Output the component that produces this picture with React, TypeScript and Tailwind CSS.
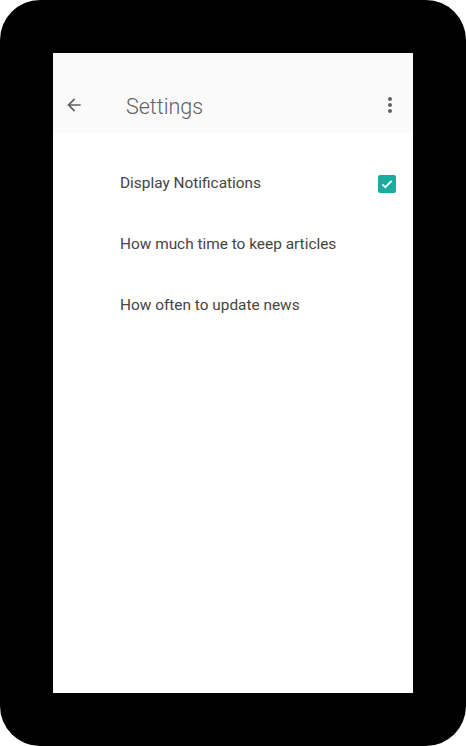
export default function App() {
  const rows = [
    { label: "Display Notifications", checked: true },
    { label: "How much time to keep articles" },
    { label: "How often to update news" },
  ];

  return (
    <div className="w-[466px] h-[746px] bg-white" style={{ fontFamily: "Roboto, 'Noto Sans', sans-serif" }}>
      <div className="w-full h-full bg-black rounded-[40px] p-[53px]">
        <div className="w-full h-full bg-white flex flex-col">
          {/* Header */}
          <div className="bg-[#fafafa] pt-[24px]">
            <div className="h-[56px] flex items-center">
              <div className="w-[73px] pl-[11px] flex items-center">
                <svg width="20" height="20" viewBox="0 0 24 24" className="text-[#616161]">
                  <path fill="currentColor" d="M20 11H7.83l5.59-5.59L12 4l-8 8 8 8 1.41-1.41L7.83 13H20v-2z" />
                </svg>
              </div>
              <h1 className="flex-1 text-[21.5px] font-light text-[#616161] pt-[4px]">Settings</h1>
              <div className="w-[35px] flex justify-start">
                <svg width="24" height="24" viewBox="0 0 24 24" className="text-[#616161]">
                  <path fill="currentColor" d="M12 8c1.1 0 2-.9 2-2s-.9-2-2-2-2 .9-2 2 .9 2 2 2zm0 2c-1.1 0-2 .9-2 2s.9 2 2 2 2-.9 2-2-.9-2-2-2zm0 6c-1.1 0-2 .9-2 2s.9 2 2 2 2-.9 2-2-.9-2-2-2z" />
                </svg>
              </div>
            </div>
          </div>

          {/* List */}
          <div className="pt-[20px]">
            {rows.map((row) => (
              <div key={row.label} className="h-[61px] flex items-center pl-[67px] pr-[17px]">
                <span className="flex-1 text-[15.4px] text-[#444444]">{row.label}</span>
                {row.checked && (
                  <span className="w-[18px] h-[18px] rounded-[2px] bg-[#17ae9f] flex items-center justify-center">
                    <svg width="14" height="14" viewBox="0 0 24 24">
                      <path d="M4 12.5l5 5L20 6.5" fill="none" stroke="white" strokeWidth="3.2" />
                    </svg>
                  </span>
                )}
              </div>
            ))}
          </div>
        </div>
      </div>
    </div>
  );
}
